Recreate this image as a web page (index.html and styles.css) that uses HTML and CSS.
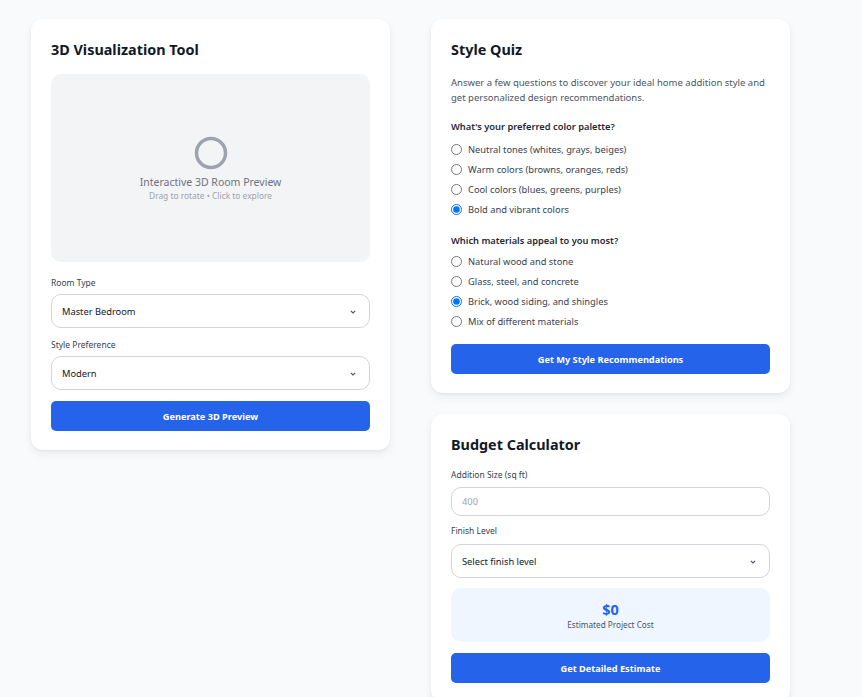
FILE: index.html
```html
<!DOCTYPE html>
<html lang="en">
<head>
<meta charset="utf-8">
<title>Home Addition Tools</title>
<link rel="stylesheet" href="styles.css">
</head>
<body>
<main class="grid">
  <section class="card viz">
    <h2 class="card-title">3D Visualization Tool</h2>
    <div class="preview">
      <svg class="spinner" width="34" height="34" viewBox="0 0 34 34" aria-hidden="true"><circle cx="17" cy="17" r="14.5" fill="none" stroke="#9ca3af" stroke-width="3.5"/></svg>
      <div class="preview-title">Interactive 3D Room Preview</div>
      <div class="preview-sub">Drag to rotate • Click to explore</div>
    </div>
    <label class="field-label">Room Type</label>
    <div class="select-wrap">
      <select class="select"><option>Master Bedroom</option></select>
      <svg class="chev" width="6" height="4" viewBox="0 0 6 4"><path d="M0.8 0.8l2.2 2.2 2.2-2.2" fill="none" stroke="#4b5563" stroke-width="1.1"/></svg>
    </div>
    <label class="field-label">Style Preference</label>
    <div class="select-wrap">
      <select class="select"><option>Modern</option></select>
      <svg class="chev" width="6" height="4" viewBox="0 0 6 4"><path d="M0.8 0.8l2.2 2.2 2.2-2.2" fill="none" stroke="#4b5563" stroke-width="1.1"/></svg>
    </div>
    <button class="btn">Generate 3D Preview</button>
  </section>

  <div class="col">
    <section class="card quiz">
      <h2 class="card-title">Style Quiz</h2>
      <p class="intro">Answer a few questions to discover your ideal home addition style and get personalized design recommendations.</p>
      <div class="question q1">What's your preferred color palette?</div>
      <div class="options o1">
        <label class="opt"><input type="radio" name="c"> Neutral tones (whites, grays, beiges)</label>
        <label class="opt"><input type="radio" name="c"> Warm colors (browns, oranges, reds)</label>
        <label class="opt"><input type="radio" name="c"> Cool colors (blues, greens, purples)</label>
        <label class="opt"><input type="radio" name="c" checked> Bold and vibrant colors</label>
      </div>
      <div class="question q2">Which materials appeal to you most?</div>
      <div class="options o2">
        <label class="opt"><input type="radio" name="m"> Natural wood and stone</label>
        <label class="opt"><input type="radio" name="m"> Glass, steel, and concrete</label>
        <label class="opt"><input type="radio" name="m" checked> Brick, wood siding, and shingles</label>
        <label class="opt"><input type="radio" name="m"> Mix of different materials</label>
      </div>
      <button class="btn">Get My Style Recommendations</button>
    </section>

    <section class="card budget">
      <h2 class="card-title">Budget Calculator</h2>
      <label class="field-label size-label">Addition Size (sq ft)</label>
      <input class="input" type="text" placeholder="400">
      <label class="field-label finish-label">Finish Level</label>
      <div class="select-wrap">
        <select class="select"><option>Select finish level</option></select>
        <svg class="chev" width="6" height="4" viewBox="0 0 6 4"><path d="M0.8 0.8l2.2 2.2 2.2-2.2" fill="none" stroke="#4b5563" stroke-width="1.1"/></svg>
      </div>
      <div class="result">
        <div class="amount">$0</div>
        <div class="result-label">Estimated Project Cost</div>
      </div>
      <button class="btn">Get Detailed Estimate</button>
    </section>
  </div>
</main>
</body>
</html>
```

FILE: styles.css
```css
* { box-sizing: border-box; }
html, body { margin: 0; }
body {
  background: #f9fafb;
  font-family: "Noto Sans", "Open Sans", sans-serif;
  color: #111827;
  overflow: hidden;
}
.grid {
  display: grid;
  grid-template-columns: 359px 359px;
  column-gap: 41px;
  align-items: start;
  padding: 19px 0 0 31px;
}
.col { display: flex; flex-direction: column; gap: 21px; }
.card {
  background: #fff;
  border-radius: 12px;
  box-shadow: 0 4px 10px rgba(0,0,0,0.06), 0 1px 3px rgba(0,0,0,0.05);
  padding: 20px 20px 19px;
  display: flex;
  flex-direction: column;
}
.card-title {
  margin: 0;
  font-size: 14.4px;
  font-weight: 700;
  line-height: 22px;
  color: #111827;
}
.viz .card-title { margin-bottom: 13px; }
.preview {
  height: 188px;
  background: #f3f4f6;
  border-radius: 10px;
  display: flex;
  flex-direction: column;
  align-items: center;
  justify-content: center;
  margin-bottom: 14px;
}
.spinner { display: block; margin-top: 2px; margin-bottom: 5px; }
.preview-title { font-size: 10.5px; color: #6b7280; line-height: 14px; }
.preview-sub { font-size: 8.4px; color: #9ca3af; line-height: 13px; }
.field-label {
  display: block;
  font-size: 8.5px;
  color: #374151;
  line-height: 14px;
  margin-bottom: 4px;
}
.select-wrap { position: relative; margin-bottom: 10px; }
.select, .input {
  display: block;
  width: 100%;
  height: 34px;
  border: 1px solid #d1d5db;
  border-radius: 10px;
  background: #fff;
  font-family: inherit;
  font-size: 9.3px;
  color: #111827;
  padding: 0 10px;
  appearance: none;
  -webkit-appearance: none;
  outline: none;
}
.input { height: 29px; margin-bottom: 8px; }
.input::placeholder { color: #9ca3af; }
.chev { position: absolute; right: 14px; top: 16px; pointer-events: none; }
.btn {
  display: block;
  width: 100%;
  height: 30px;
  border: 0;
  border-radius: 5px;
  background: #2563eb;
  color: #fff;
  font-family: inherit;
  font-size: 9.2px;
  font-weight: 700;
  cursor: pointer;
}
.viz .select-wrap:last-of-type { margin-bottom: 11px; }
.intro {
  margin: 14px 0 0;
  font-size: 9.5px;
  line-height: 15px;
  color: #4b5563;
}
.question {
  font-size: 9.3px;
  font-weight: 600;
  line-height: 14px;
  color: #1f2937;
}
.q1 { margin-top: 15px; }
.q2 { margin-top: 15px; }
.options { display: flex; flex-direction: column; }
.o1 { margin-top: 5px; }
.o2 { margin-top: 3px; }
.opt {
  display: flex;
  align-items: center;
  height: 20px;
  font-size: 9.3px;
  color: #374151;
}
.opt input {
  width: 11px;
  height: 11px;
  margin: 0 6px 0 0;
}
.quiz .btn { margin-top: 13px; }
.budget .card-title { margin-bottom: 12px; }
.size-label { margin-bottom: 5px; }
.finish-label { margin-bottom: 6px; }
.budget .select-wrap { margin-bottom: 10px; }
.result {
  background: #eff6ff;
  border-radius: 10px;
  height: 54px;
  display: flex;
  flex-direction: column;
  align-items: center;
  justify-content: center;
  margin-bottom: 11px;
}
.amount { font-size: 14.5px; font-weight: 700; color: #2563eb; line-height: 18px; }
.result-label { font-size: 8.2px; color: #4b5563; line-height: 13px; }
```
